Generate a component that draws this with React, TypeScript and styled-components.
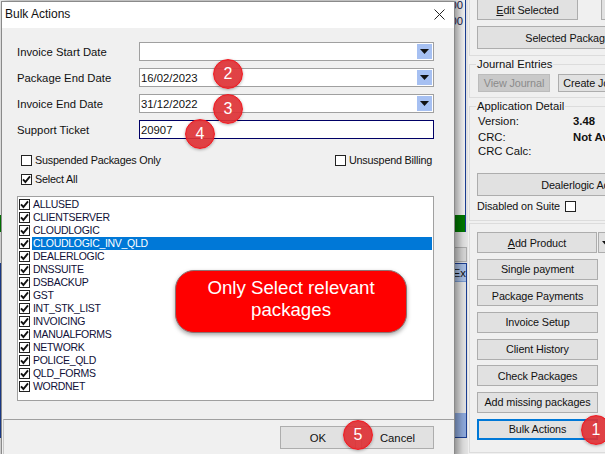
import React from "react";
import styled, { createGlobalStyle } from "styled-components";

const GlobalStyle = createGlobalStyle`
  html, body {
    margin: 0;
    padding: 0;
    background: #f0f0f0;
  }
  * {
    box-sizing: border-box;
  }
`;

const uiFont = `"Liberation Sans", "Noto Sans", sans-serif`;

const Screen = styled.div`
  position: relative;
  display: flex;
  width: 605px;
  height: 454px;
  overflow: hidden;
  font-family: ${uiFont};
  font-size: 11.3px;
  color: #111;
`;

/* the main window behind the dialog */
const Backdrop = styled.div`
  display: flex;
  flex-direction: column;
  width: 468px;
  flex-shrink: 0;
  background: #e4e4e4;
`;

const GridArea = styled.div`
  display: flex;
  flex-direction: column;
  align-items: flex-end;
  height: 215px;
  width: 466px;
  padding: 0 2px 0 0;
  background: #f4f4f4;
  border-right: 1px solid #1c3f94;
  color: #1a1a50;
`;

const GridCell = styled.div`
  height: 16px;
  line-height: 16px;
  margin-top: -3px;
  margin-bottom: 3px;
`;

const TotalBar = styled.div`
  height: 17px;
  width: 466px;
  background: #007a00;
  border-right: 1px solid #1c3f94;
`;

const GrayBar = styled.div`
  display: flex;
  justify-content: flex-end;
  height: 31px;
  padding: 15px 1px 0 0;
`;

const SmallGrayButton = styled.div`
  width: 40px;
  height: 15px;
  background: #d8d8d8;
  border: 1px solid #adadad;
`;

const TabFrame = styled.div`
  display: flex;
  flex-direction: column;
  height: 175px;
  width: 467px;
  background: #e6e6e6;
  border: 1px solid #1c3f94;
`;

const TabHeader = styled.div`
  height: 18px;
  background: #a9c0e6;
  border-bottom: 1px solid #7d9ed3;
  text-align: right;
  line-height: 18px;
`;

const TabSpacer = styled.div`
  flex: 1;
`;

const TabSelected = styled.div`
  height: 24px;
  background: #8fabde;
`;

/* right hand action panel */
const SidePanel = styled.div`
  flex: 1;
  min-width: 0;
  overflow: hidden;
  padding-left: 1px;
  background: #f0f0f0;
`;

const Group = styled.fieldset`
  margin: 0 -12px 0 0;
  padding: 0 0 0 7px;
  min-width: 0;
  border: 1px solid #dcdcdc;
`;

const TopGroup = styled(Group)`
  height: 56px;
  border-top: none;
  padding-top: 0;
  margin-bottom: 2px;
`;

const JournalGroup = styled(Group)`
  height: 40px;
  margin-bottom: 2px;
`;

const DetailGroup = styled(Group)`
  height: 121px;
  margin-bottom: 2px;
`;

const ActionsGroup = styled(Group)`
  height: 230px;
  padding-top: 8px;
`;

const Legend = styled.legend`
  margin-left: -1px;
  padding: 0 1px;
  line-height: 13px;
`;

const PanelButton = styled.div<{ $width?: number; $height?: number; $focused?: boolean }>`
  display: flex;
  align-items: center;
  justify-content: center;
  flex-shrink: 0;
  width: ${({ $width }) => $width ?? 121}px;
  height: ${({ $height }) => $height ?? 21}px;
  background: #e1e1e1;
  border: ${({ $focused }) => ($focused ? "2px solid #0078d7" : "1px solid #adadad")};
  font-size: 10.8px;
  letter-spacing: -0.1px;
  white-space: nowrap;
  overflow: hidden;
`;

const MutedButton = styled(PanelButton)`
  background: #c9c9c9;
  border-color: #bcbcbc;
  color: #8b8b8b;
`;

const Row = styled.div<{ $gap?: number }>`
  display: flex;
  gap: ${({ $gap }) => $gap ?? 0}px;
`;

const EditRow = styled(Row)`
  margin-top: -1px;
  margin-bottom: 6px;
`;

const JournalRow = styled(Row)`
  margin-top: 3px;
  margin-left: 1px;
`;

const ActionStack = styled.div`
  display: flex;
  flex-direction: column;
  gap: 5.67px;
`;

const DetailGrid = styled.div`
  display: grid;
  grid-template-columns: 95px 1fr;
  grid-template-rows: 16px 16px 12px;
  margin: 0 0 16px 1px;
  align-items: center;
  line-height: 14px;
`;

const DetailValue = styled.span`
  font-weight: 700;
  white-space: nowrap;
`;

const DisabledRow = styled.div`
  display: flex;
  align-items: center;
  gap: 5px;
  margin-top: 4px;
  font-size: 10.8px;
  letter-spacing: -0.1px;
`;

/* dialog */
const Dialog = styled.div`
  position: absolute;
  left: 1px;
  top: 1px;
  width: 454px;
  height: 460px;
  display: flex;
  flex-direction: column;
  background: #f0f0f0;
  border: 1px solid #8a8a8a;
  box-shadow: 3px 0 9px rgba(0, 0, 0, 0.45);
`;

const TitleBar = styled.div`
  display: flex;
  align-items: center;
  justify-content: space-between;
  flex-shrink: 0;
  height: 26px;
  padding: 0 9px 2px 3px;
  background: #fff;
  font-size: 12px;
`;

const DialogBody = styled.div`
  display: flex;
  flex-direction: column;
  padding: 14px 20px 0 15px;
`;

const FieldRows = styled.div`
  display: flex;
  flex-direction: column;
  gap: 7px;
`;

const FieldRow = styled.div`
  display: grid;
  grid-template-columns: 122px 1fr;
  align-items: center;
  height: 19px;
`;

const FieldBox = styled.div<{ $active?: boolean }>`
  display: flex;
  align-items: center;
  justify-content: space-between;
  height: 19px;
  padding: 0 1px 0 1px;
  background: #fff;
  border: 1px solid ${({ $active }) => ($active ? "#000066" : "#a0a0a0")};
`;

const ComboButton = styled.div`
  display: flex;
  align-items: center;
  justify-content: center;
  width: 15px;
  height: 15px;
  background: #a6c0f2;
`;

const OptionsRow = styled.div`
  display: flex;
  align-items: center;
  justify-content: space-between;
  margin: 15px 0 0 4px;
  padding-right: 2px;
`;

const SelectAllRow = styled.div`
  margin: 6px 0 0 4px;
`;

const CheckLabel = styled.label`
  display: flex;
  align-items: center;
  gap: 3px;
  font-size: 10.8px;
  letter-spacing: -0.2px;
  line-height: 13px;
`;

const Box = styled.span`
  display: flex;
  align-items: center;
  justify-content: center;
  flex-shrink: 0;
  width: 11px;
  height: 11px;
  background: #fff;
  border: 1px solid #222;
`;

const PackageList = styled.div`
  height: 205px;
  margin-top: 10px;
  padding: 1px;
  background: #fff;
  border: 1px solid #a0a0a0;
`;

const PackageRow = styled.div`
  display: flex;
  align-items: center;
  height: 13px;
  gap: 2px;
  font-size: 10.5px;
  letter-spacing: -0.3px;
  color: #101038;
`;

const PackageName = styled.span<{ $selected?: boolean }>`
  flex: 1;
  height: 13px;
  line-height: 13px;
  padding-left: 1px;
  background: ${({ $selected }) => ($selected ? "#0078d7" : "transparent")};
  color: ${({ $selected }) => ($selected ? "#fff" : "inherit")};
`;

const Footer = styled.div`
  display: flex;
  justify-content: flex-end;
  gap: 5px;
  margin-top: 18px;
  height: 40px;
  padding: 6px 20px 0 0;
  border-top: 1px solid #a0a0a0;
  border-left: 1px solid #c8c8c8;
  margin-left: 1px;
`;

const DialogButton = styled.div<{ $width: number }>`
  display: flex;
  align-items: center;
  justify-content: center;
  width: ${({ $width }) => $width}px;
  height: 23px;
  background: #e1e1e1;
  border: 1px solid #adadad;
`;

/* annotations laid over the screenshot */
const Badge = styled.div<{ $x: number; $y: number }>`
  position: absolute;
  left: ${({ $x }) => $x}px;
  top: ${({ $y }) => $y}px;
  display: flex;
  align-items: center;
  justify-content: center;
  width: 30px;
  height: 30px;
  border-radius: 50%;
  background: radial-gradient(circle, rgba(222, 50, 54, 0.92) 60%, rgba(236, 24, 30, 0.96) 100%);
  border: 1px solid #f01820;
  box-shadow: 0 1px 3px rgba(0, 0, 0, 0.3);
  color: #fff;
  font-size: 16px;
`;

const Callout = styled.div`
  position: absolute;
  left: 175px;
  top: 270px;
  width: 232px;
  height: 63px;
  display: flex;
  align-items: center;
  justify-content: center;
  padding: 0 20px 6px;
  border-radius: 19px;
  background: #ff0000;
  border: 1px solid #8e7272;
  box-shadow: 0 2px 4px rgba(0, 0, 0, 0.35);
  color: #fff;
  font-size: 18.7px;
  line-height: 22px;
  text-align: center;
`;

const Access = styled.span`
  text-decoration: underline;
`;

const Tick = () => (
  <svg width="9" height="9" viewBox="0 0 9 9" aria-hidden="true">
    <path d="M1 4.4 L3.4 7 L8 1.4" fill="none" stroke="#111" strokeWidth="1.9" />
  </svg>
);

const CheckBox: React.FC<{ checked?: boolean }> = ({ checked }) => <Box>{checked && <Tick />}</Box>;

const Caret = ({ width = 9, height = 5 }: { width?: number; height?: number }) => (
  <svg width={width} height={height} viewBox="0 0 9 5" aria-hidden="true">
    <path d="M0 0 H9 L4.5 5 Z" fill="#111" />
  </svg>
);

const CloseIcon = () => (
  <svg width="11" height="11" viewBox="0 0 11 11" aria-hidden="true">
    <path d="M0.5 0.5 L10.5 10.5 M10.5 0.5 L0.5 10.5" stroke="#222" strokeWidth="1" />
  </svg>
);

const fields = [
  { label: "Invoice Start Date", value: "" },
  { label: "Package End Date", value: "16/02/2023" },
  { label: "Invoice End Date", value: "31/12/2022" },
];

const packages = [
  "ALLUSED",
  "CLIENTSERVER",
  "CLOUDLOGIC",
  "CLOUDLOGIC_INV_QLD",
  "DEALERLOGIC",
  "DNSSUITE",
  "DSBACKUP",
  "GST",
  "INT_STK_LIST",
  "INVOICING",
  "MANUALFORMS",
  "NETWORK",
  "POLICE_QLD",
  "QLD_FORMS",
  "WORDNET",
];

const actions = ["Single payment", "Package Payments", "Invoice Setup", "Client History", "Check Packages", "Add missing packages"];

const badges = [
  { n: 1, x: 581, y: 415 },
  { n: 2, x: 213, y: 59 },
  { n: 3, x: 213, y: 94 },
  { n: 4, x: 185, y: 119 },
  { n: 5, x: 343, y: 420 },
];

export default function App() {
  return (
    <Screen>
      <GlobalStyle />
      <Backdrop>
        <GridArea>
          <GridCell>0.00</GridCell>
          <GridCell>0.00</GridCell>
        </GridArea>
        <TotalBar />
        <GrayBar>
          <SmallGrayButton />
        </GrayBar>
        <TabFrame>
          <TabHeader>Ex</TabHeader>
          <TabSpacer />
          <TabSelected />
        </TabFrame>
      </Backdrop>

      <SidePanel>
        <TopGroup>
          <EditRow $gap={23}>
            <PanelButton $width={101} $height={21}>
              <span>
                <Access>E</Access>dit Selected
              </span>
            </PanelButton>
            <PanelButton $width={40} $height={21} />
          </EditRow>
          <PanelButton $width={182} $height={23}>
            Selected Package
          </PanelButton>
        </TopGroup>

        <JournalGroup>
          <Legend>Journal Entries</Legend>
          <JournalRow $gap={8}>
            <MutedButton $width={72} $height={18}>
              View Journal
            </MutedButton>
            <PanelButton $width={80} $height={18}>
              Create Journal
            </PanelButton>
          </JournalRow>
        </JournalGroup>

        <DetailGroup>
          <Legend>Application Detail</Legend>
          <DetailGrid>
            <span>Version:</span>
            <DetailValue>3.48</DetailValue>
            <span>CRC:</span>
            <DetailValue>Not Available</DetailValue>
            <span>CRC Calc:</span>
          </DetailGrid>
          <PanelButton $width={222} $height={23}>
            Dealerlogic Account
          </PanelButton>
          <DisabledRow>
            <span>Disabled on Suite</span>
            <CheckBox />
          </DisabledRow>
        </DetailGroup>

        <ActionsGroup>
          <ActionStack>
            <Row $gap={1}>
              <PanelButton $width={120} $height={21}>
                <span>
                  <Access>A</Access>dd Product
                </span>
              </PanelButton>
              <PanelButton $width={14} $height={21}>
                <Caret width={7} height={4} />
              </PanelButton>
            </Row>
            {actions.map((action) => (
              <PanelButton key={action}>{action}</PanelButton>
            ))}
            <PanelButton $focused>Bulk Actions</PanelButton>
          </ActionStack>
        </ActionsGroup>
      </SidePanel>

      <Dialog>
        <TitleBar>
          <span>Bulk Actions</span>
          <CloseIcon />
        </TitleBar>
        <DialogBody>
          <FieldRows>
            {fields.map((field) => (
              <FieldRow key={field.label}>
                <span>{field.label}</span>
                <FieldBox>
                  <span>{field.value}</span>
                  <ComboButton>
                    <Caret />
                  </ComboButton>
                </FieldBox>
              </FieldRow>
            ))}
            <FieldRow>
              <span>Support Ticket</span>
              <FieldBox $active>
                <span>20907</span>
              </FieldBox>
            </FieldRow>
          </FieldRows>

          <OptionsRow>
            <CheckLabel>
              <CheckBox />
              Suspended Packages Only
            </CheckLabel>
            <CheckLabel>
              <CheckBox />
              Unsuspend Billing
            </CheckLabel>
          </OptionsRow>
          <SelectAllRow>
            <CheckLabel>
              <CheckBox checked />
              Select All
            </CheckLabel>
          </SelectAllRow>

          <PackageList>
            {packages.map((name) => (
              <PackageRow key={name}>
                <CheckBox checked />
                <PackageName $selected={name === "CLOUDLOGIC_INV_QLD"}>{name}</PackageName>
              </PackageRow>
            ))}
          </PackageList>
        </DialogBody>
        <Footer>
          <DialogButton $width={76}>OK</DialogButton>
          <DialogButton $width={73}>Cancel</DialogButton>
        </Footer>
      </Dialog>

      <Callout>Only Select relevant packages</Callout>
      {badges.map((badge) => (
        <Badge key={badge.n} $x={badge.x} $y={badge.y}>
          {badge.n}
        </Badge>
      ))}
    </Screen>
  );
}
